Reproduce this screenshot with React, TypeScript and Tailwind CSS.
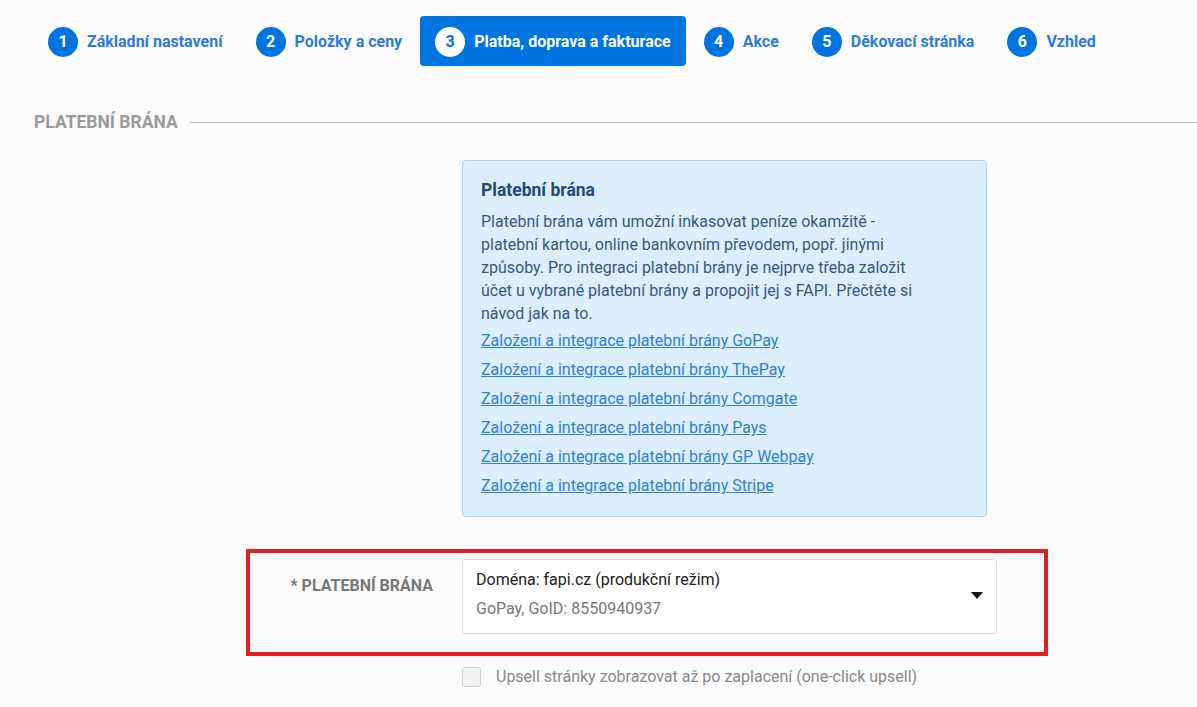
const steps = [
  { n: 1, label: "Základní nastavení" },
  { n: 2, label: "Položky a ceny" },
  { n: 3, label: "Platba, doprava a fakturace", active: true },
  { n: 4, label: "Akce" },
  { n: 5, label: "Děkovací stránka" },
  { n: 6, label: "Vzhled" },
];

const gateways = ["GoPay", "ThePay", "Comgate", "Pays", "GP Webpay", "Stripe"];

export default function App() {
  return (
    <div
      className="min-h-[707px] w-[1197px] bg-[#fcfcfc] text-[#333]"
      style={{ fontFamily: "Roboto, 'Liberation Sans', sans-serif" }}
    >
      {/* Steps */}
      <div className="flex items-center gap-[3px] pl-[33px] pt-[16px]">
        {steps.map((s) => (
          <div
            key={s.n}
            className={
              s.active
                ? "flex h-[50px] items-center gap-[9px] rounded-[4px] bg-[#0074e0] px-[15px] pt-px"
                : "flex h-[50px] items-center gap-[9px] px-[15px] pt-px"
            }
          >
            <span
              className={
                s.active
                  ? "flex h-[30px] w-[30px] items-center justify-center rounded-full bg-white text-[16px] font-bold text-[#0074e0]"
                  : "flex h-[30px] w-[30px] items-center justify-center rounded-full bg-[#0074e0] text-[16px] font-bold text-white"
              }
            >
              {s.n}
            </span>
            <span
              className={
                s.active
                  ? "text-[16px] font-bold text-white"
                  : "text-[16px] font-bold text-[#2c7bd9]"
              }
            >
              {s.label}
            </span>
          </div>
        ))}
      </div>

      {/* Section heading */}
      <div className="mt-[42px] flex items-center gap-[12px] pl-[34px] pt-px">
        <h2 className="text-[17.5px] font-bold uppercase text-[#9a9a9a]">Platební brána</h2>
        <div className="h-px flex-1 bg-[#bdbdbd]" />
      </div>

      {/* Info box */}
      <div className="ml-[462px] mt-[25px] w-[525px] rounded-[4px] border border-[#a9d5f0] bg-[#dcefff] px-[18px] pb-[16px] pt-[17px]">
        <h3 className="text-[17.5px] font-bold leading-[24px] text-[#204a72]">Platební brána</h3>
        <p className="mt-[8px] max-w-[445px] text-[16px] leading-[23px] text-[#36597a]">
          Platební brána vám umožní inkasovat peníze okamžitě - platební kartou, online bankovním převodem, popř.
          jinými způsoby. Pro integraci platební brány je nejprve třeba založit účet u vybrané platební brány a
          propojit jej s FAPI. Přečtěte si návod jak na to.
        </p>
        <div className="mt-px flex flex-col">
          {gateways.map((g) => (
            <a
              key={g}
              href="#"
              className="text-[16px] leading-[29px] text-[#2f7fd4] underline"
            >
              Založení a integrace platební brány {g}
            </a>
          ))}
        </div>
      </div>

      {/* Gateway select */}
      <div className="ml-[246px] mt-[32px] flex w-[802px] border-4 border-[#e41e25] pb-[18px] pt-[6px]">
        <label className="w-[183px] pt-[15px] text-right text-[16px] font-bold uppercase text-[#777]">
          * Platební brána
        </label>
        <div className="ml-[29px] flex h-[75px] w-[535px] items-start justify-between rounded-[3px] border border-[#dcdcdc] bg-white pl-[13px] pr-[13px] pt-[9px]">
          <div className="flex flex-col">
            <span className="text-[16px] leading-[22px] text-[#222]">Doména: fapi.cz (produkční režim)</span>
            <span className="mt-[8px] text-[16px] leading-[20px] text-[#777]">GoPay, GoID: 8550940937</span>
          </div>
          <svg width="12" height="7" viewBox="0 0 12 7" className="mt-[23px]">
            <path d="M0 0h12L6 7z" fill="#111" />
          </svg>
        </div>
      </div>

      {/* Checkbox */}
      <label className="ml-[462px] mt-[9px] flex items-center gap-[15px]">
        <span className="h-[20px] w-[19px] rounded-[3px] border border-[#cfcfcf] bg-[#f3f3f3]" />
        <span className="text-[16px] text-[#888]">Upsell stránky zobrazovat až po zaplacení (one-click upsell)</span>
      </label>
    </div>
  );
}
